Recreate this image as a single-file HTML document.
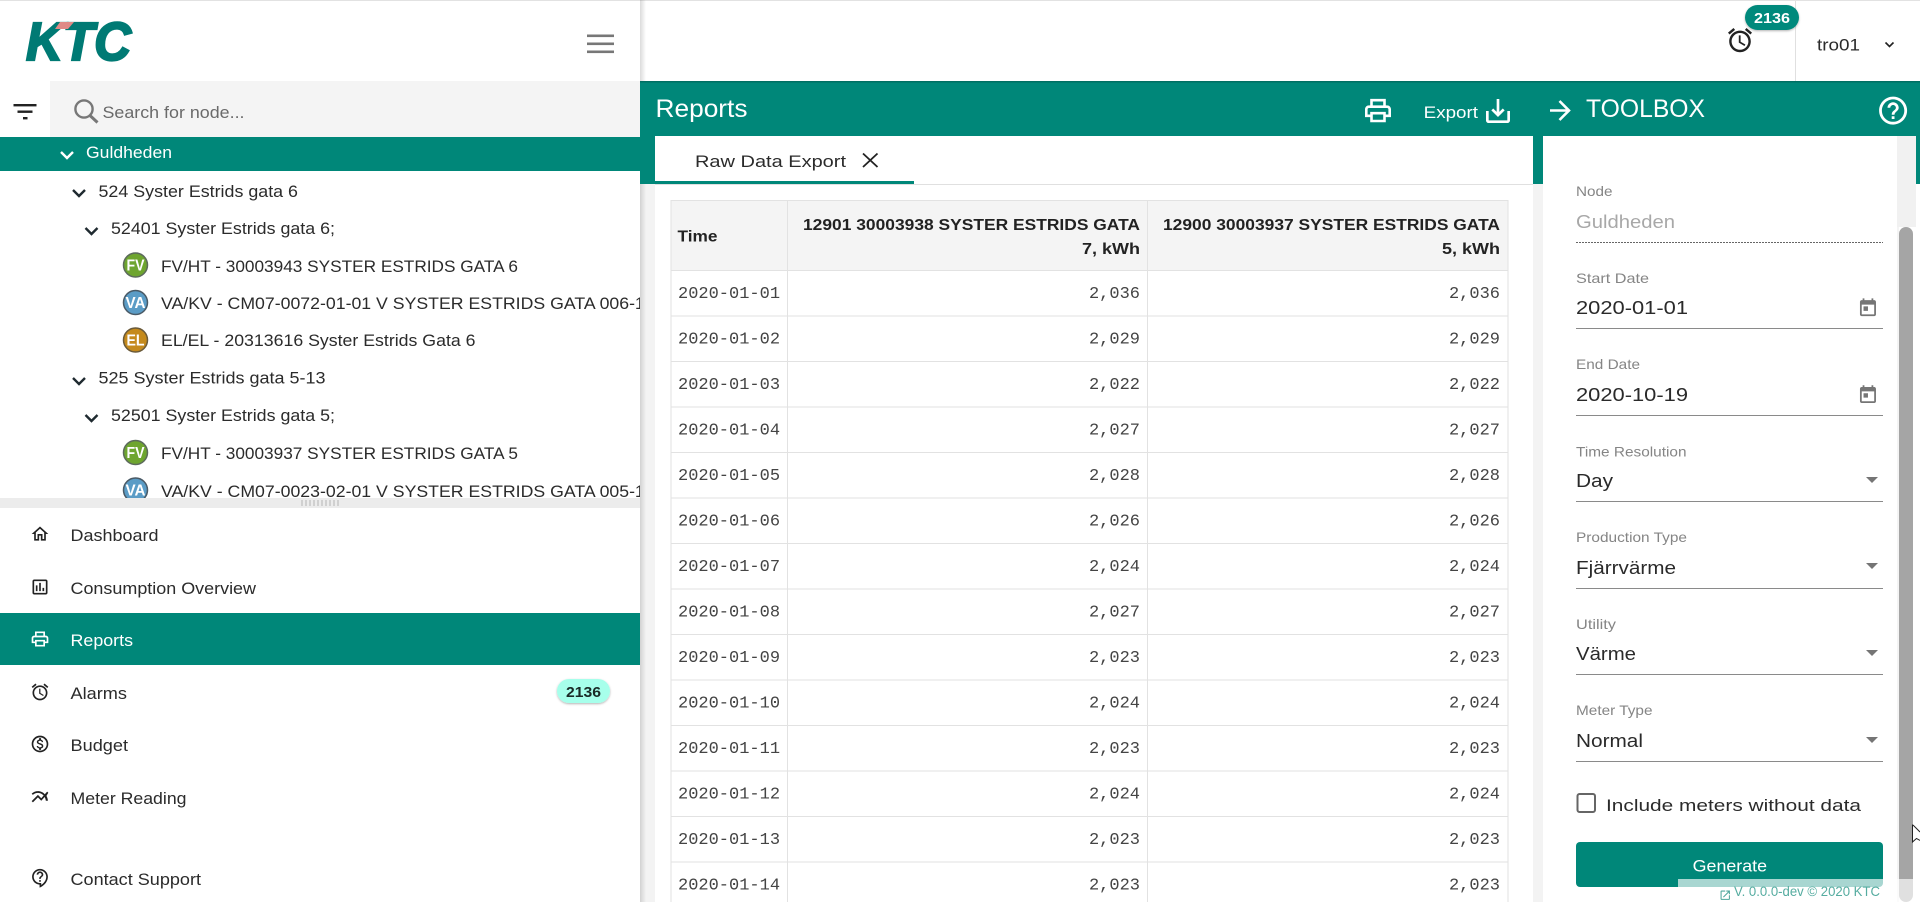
<!DOCTYPE html>
<html lang="en">
<head>
<meta charset="utf-8">
<title>KTC Reports</title>
<style>
html,body{margin:0;padding:0;background:#fff;width:1920px;height:902px;overflow:hidden}
svg{display:block}
text{font-family:"Liberation Sans",sans-serif;font-size:16px;fill:#2b2b2b}
.w{fill:#fff}
.t{font-size:16.5px}
.s{fill:#fff;font-size:15px;font-weight:bold;text-anchor:middle}
.n{fill:#fff;font-size:16px;font-weight:bold;text-anchor:middle}
.h{font-size:25px;fill:#fff}
.b{font-weight:bold;fill:#222}
.m{font-family:"Liberation Mono",monospace;font-size:17px;fill:#444}
.r{text-anchor:end}
.l{font-size:14px;fill:#858585}
.v{font-size:18px;fill:#2a2a2a}
.i{fill:#222}
.g{fill:#757575}
</style>
</head>
<body>
<svg width="1920" height="902" viewBox="0 0 1920 902" xmlns="http://www.w3.org/2000/svg">
<defs>
<linearGradient id="sh" x1="0" x2="1" y1="0" y2="0"><stop offset="0" stop-color="#000" stop-opacity=".14"/><stop offset="1" stop-color="#000" stop-opacity="0"/></linearGradient>
<filter id="bs" x="-20%" y="-20%" width="140%" height="150%"><feDropShadow dx="0" dy="1" stdDeviation="1" flood-color="#000" flood-opacity=".3"/></filter>
<clipPath id="treeClip"><rect x="0" y="171" width="640" height="327"/></clipPath>
<path id="print" d="M19 8h-1V3H6v5H5c-1.66 0-3 1.34-3 3v6h4v4h12v-4h4v-6c0-1.66-1.34-3-3-3zM8 5h8v3H8V5zm8 12v2H8v-4h8v2zm2-2v-2H6v2H4v-4c0-.55.45-1 1-1h14c.55 0 1 .45 1 1v4h-2z"/>
<path id="alarm" d="M22 5.72l-4.6-3.86-1.29 1.53 4.6 3.86L22 5.72zM7.88 3.39L6.6 1.86 2 5.71l1.29 1.53 4.59-3.85zM12.5 8H11v6l4.75 2.85.75-1.23-4-2.37V8zM12 4c-4.97 0-9 4.03-9 9s4.02 9 9 9c4.97 0 9-4.03 9-9s-4.03-9-9-9zm0 16c-3.87 0-7-3.13-7-7s3.13-7 7-7 7 3.13 7 7-3.13 7-7 7z"/>
<path id="cal" d="M19 3h-1V1h-2v2H8V1H6v2H5c-1.11 0-2 .9-2 2v14c0 1.1.89 2 2 2h14c1.1 0 2-.9 2-2V5c0-1.1-.9-2-2-2zm0 16H5V8h14v11zM7 10h5v5H7z"/>
</defs>

<rect width="1920" height="902" fill="#fff"/>
<rect width="1920" height="1" fill="#e2e2e2"/>

<!-- Logo -->
<text x="26" y="60" textLength="105" lengthAdjust="spacingAndGlyphs" style="font-size:54px;font-weight:bold;font-style:italic;fill:#007a74;stroke:#007a74;stroke-width:2.2px">KTC</text>
<polygon points="60,22 74,22 68,29 55,29" fill="#e08a86"/>

<!-- Hamburger -->
<g fill="#777"><rect x="587" y="34.5" width="27" height="2.6"/><rect x="587" y="42.5" width="27" height="2.6"/><rect x="587" y="50.5" width="27" height="2.6"/></g>

<!-- Filter + search -->
<g fill="#222"><rect x="13.5" y="104" width="23" height="2.4"/><rect x="17.5" y="110.5" width="15" height="2.4"/><rect x="23" y="117" width="4.5" height="2.4"/></g>
<rect x="50" y="81" width="590" height="56" fill="#f4f4f4"/>
<circle cx="84" cy="109" r="8.6" fill="none" stroke="#777" stroke-width="2.4"/>
<path d="M90 115.5L97.5 122.5" stroke="#777" stroke-width="3" fill="none"/>
<text class="t" x="102.5" y="118" textLength="142" lengthAdjust="spacingAndGlyphs" style="fill:#6a6a6a">Search for node...</text>

<!-- Tree -->
<rect x="0" y="137" width="640" height="34" fill="#008779"/>
<path d="M61 152l6 6 6-6" fill="none" stroke="#fff" stroke-width="2.4"/>
<text class="w t" x="86" y="158" textLength="86" lengthAdjust="spacingAndGlyphs">Guldheden</text>
<g clip-path="url(#treeClip)">
<g fill="none" stroke="#1f2a30" stroke-width="2.4">
<path d="M73 190l6 6 6-6"/><path d="M85.5 228l6 6 6-6"/><path d="M73 378l6 6 6-6"/><path d="M85.5 415l6 6 6-6"/>
</g>
<text class="t" x="98.5" y="197" textLength="199.5" lengthAdjust="spacingAndGlyphs">524 Syster Estrids gata 6</text>
<text class="t" x="111" y="234" textLength="224" lengthAdjust="spacingAndGlyphs">52401 Syster Estrids gata 6;</text>
<text class="t" x="161" y="272" textLength="357" lengthAdjust="spacingAndGlyphs">FV/HT - 30003943 SYSTER ESTRIDS GATA 6</text>
<text class="t" x="161" y="309" textLength="474" lengthAdjust="spacingAndGlyphs">VA/KV - CM07-0072-01-01 V SYSTER ESTRIDS GATA 006-</text>
<text class="t" x="635" y="309">1</text>
<text class="t" x="161" y="346" textLength="314.5" lengthAdjust="spacingAndGlyphs">EL/EL - 20313616 Syster Estrids Gata 6</text>
<text class="t" x="98.5" y="383.5" textLength="227" lengthAdjust="spacingAndGlyphs">525 Syster Estrids gata 5-13</text>
<text class="t" x="111" y="421" textLength="224" lengthAdjust="spacingAndGlyphs">52501 Syster Estrids gata 5;</text>
<text class="t" x="161" y="459" textLength="357" lengthAdjust="spacingAndGlyphs">FV/HT - 30003937 SYSTER ESTRIDS GATA 5</text>
<text class="t" x="161" y="497" textLength="474" lengthAdjust="spacingAndGlyphs">VA/KV - CM07-0023-02-01 V SYSTER ESTRIDS GATA 005-</text>
<text class="t" x="635" y="497">1</text>
<g stroke="#5c6a5c" stroke-width="1.5">
<circle cx="135.5" cy="265" r="12" fill="#6ea52f"/>
<circle cx="135.5" cy="302.5" r="12" fill="#5b9cc6" stroke="#4a5a66"/>
<circle cx="135.5" cy="340" r="12" fill="#c58a1c" stroke="#6a5a3a"/>
<circle cx="135.5" cy="452.5" r="12" fill="#6ea52f"/>
<circle cx="135.5" cy="490" r="12" fill="#5b9cc6" stroke="#4a5a66"/>
</g>
<text class="n" x="135.5" y="270.5" textLength="18" lengthAdjust="spacingAndGlyphs">FV</text>
<text class="n" x="135.5" y="308" textLength="20" lengthAdjust="spacingAndGlyphs">VA</text>
<text class="n" x="135.5" y="345.5" textLength="18" lengthAdjust="spacingAndGlyphs">EL</text>
<text class="n" x="135.5" y="458" textLength="18" lengthAdjust="spacingAndGlyphs">FV</text>
<text class="n" x="135.5" y="495.5" textLength="20" lengthAdjust="spacingAndGlyphs">VA</text>
</g>

<!-- Splitter -->
<rect x="0" y="498" width="640" height="10" fill="#ececec"/>
<g fill="#d0d0d0"><rect x="301" y="500" width="2" height="6"/><rect x="305" y="500" width="2" height="6"/><rect x="309" y="500" width="2" height="6"/><rect x="313" y="500" width="2" height="6"/><rect x="317" y="500" width="2" height="6"/><rect x="321" y="500" width="2" height="6"/><rect x="325" y="500" width="2" height="6"/><rect x="329" y="500" width="2" height="6"/><rect x="333" y="500" width="2" height="6"/><rect x="337" y="500" width="2" height="6"/></g>

<!-- Navigation -->
<rect x="0" y="613" width="640" height="52" fill="#008779"/>
<path class="i" transform="translate(30 524) scale(.8333)" d="M12 5.69l5 4.5V18h-2v-6H9v6H7v-7.81l5-4.5M12 3L2 12h3v8h6v-6h2v6h6v-8h3L12 3z"/>
<text class="t" x="70.5" y="541" textLength="88" lengthAdjust="spacingAndGlyphs">Dashboard</text>
<path class="i" transform="translate(30 577) scale(.8333)" d="M19 3H5c-1.1 0-2 .9-2 2v14c0 1.1.9 2 2 2h14c1.1 0 2-.9 2-2V5c0-1.1-.9-2-2-2zm0 16H5V5h14v14zM7 10h2v7H7zm4-3h2v10h-2zm4 6h2v4h-2z"/>
<text class="t" x="70.5" y="594" textLength="185.5" lengthAdjust="spacingAndGlyphs">Consumption Overview</text>
<use href="#print" fill="#fff" transform="translate(30 629) scale(.8333)"/>
<text class="w t" x="70.5" y="646" textLength="62.5" lengthAdjust="spacingAndGlyphs">Reports</text>
<use href="#alarm" fill="#222" transform="translate(30 682) scale(.8333)"/>
<text class="t" x="70.5" y="699" textLength="56.5" lengthAdjust="spacingAndGlyphs">Alarms</text>
<rect x="557" y="679" width="53" height="24" rx="12" fill="#a7ffeb" filter="url(#bs)"/>
<text class="s" x="583.5" y="697" textLength="35" lengthAdjust="spacingAndGlyphs" style="fill:#1a2a26">2136</text>
<path class="i" transform="translate(30 734) scale(.8333)" d="M12 2C6.48 2 2 6.48 2 12s4.48 10 10 10 10-4.48 10-10S17.52 2 12 2zm0 18c-4.41 0-8-3.59-8-8s3.59-8 8-8 8 3.59 8 8-3.59 8-8 8zm.31-8.86c-1.77-.45-2.34-.94-2.34-1.67 0-.84.79-1.43 2.1-1.43 1.38 0 1.9.66 1.94 1.64h1.71c-.05-1.34-.87-2.57-2.49-2.97V5H10.9v1.69c-1.51.32-2.72 1.3-2.72 2.81 0 1.79 1.49 2.69 3.66 3.21 1.95.46 2.34 1.15 2.34 1.87 0 .53-.39 1.39-2.1 1.39-1.6 0-2.23-.72-2.32-1.64H8.04c.1 1.7 1.36 2.66 2.86 2.97V19h2.34v-1.67c1.52-.29 2.72-1.16 2.73-2.77-.01-2.2-1.9-2.96-3.66-3.42z"/>
<text class="t" x="70.5" y="751" textLength="57.5" lengthAdjust="spacingAndGlyphs">Budget</text>
<path class="i" transform="translate(30 787) scale(.8333)" d="M22 6.92l-1.41-1.41-2.85 3.21C15.68 6.4 12.83 5 9.61 5 6.72 5 4.07 6.16 2 8l1.42 1.42C5.12 7.93 7.27 7 9.61 7c2.74 0 5.09 1.26 6.77 3.24l-2.88 3.24-4-4L2 16.99l1.5 1.5 6-6.01 4 4 4.05-4.55c.75 1.35 1.25 2.9 1.44 4.55H21.5c-.2-2.12-.77-4.05-1.75-5.78L22 6.92z"/>
<text class="t" x="70.5" y="804" textLength="116" lengthAdjust="spacingAndGlyphs">Meter Reading</text>
<path class="i" transform="translate(30.4 868) scale(.8333)" d="M11 23.59v-3.6c-5.01-.26-9-4.42-9-9.49C2 5.26 6.26 1 11.5 1S21 5.26 21 10.5c0 4.95-3.44 9.93-8.57 12.4l-1.43.69zM11.5 3C7.36 3 4 6.36 4 10.5S7.36 18 11.5 18H13v2.3c3.64-2.3 6-6.08 6-9.8C19 6.36 15.64 3 11.5 3zm-1 11.5h2v2h-2zm2-1.5h-2c0-3.25 3-3 3-5 0-1.1-.9-2-2-2s-2 .9-2 2h-2c0-2.21 1.79-4 4-4s4 1.79 4 4c0 2.5-3 2.75-3 5z"/>
<text class="t" x="70.5" y="885" textLength="130.5" lengthAdjust="spacingAndGlyphs">Contact Support</text>

<!-- Top right -->
<use href="#alarm" fill="#222" transform="translate(1725.6 25.8) scale(1.2)"/>
<rect x="1795" y="1" width="1" height="80" fill="#e0e0e0"/>
<rect x="1745" y="5" width="54" height="25" rx="12.5" fill="#00897b" filter="url(#bs)"/>
<text class="s" x="1772" y="23" textLength="36" lengthAdjust="spacingAndGlyphs">2136</text>
<text class="t" x="1817" y="50.5" textLength="43" lengthAdjust="spacingAndGlyphs">tro01</text>
<path d="M1885.5 42.5l4 4 4-4" fill="none" stroke="#222" stroke-width="1.6"/>

<!-- Main background -->
<rect x="640" y="81" width="1280" height="103" fill="#008779"/>
<rect x="640" y="81" width="1280" height="1.5" fill="#006f63"/>
<rect x="640" y="184" width="15" height="718" fill="#f3f3f3"/>
<rect x="1533" y="184" width="10" height="718" fill="#f3f3f3"/>
<rect x="640" y="0" width="6" height="81" fill="url(#sh)"/>
<rect x="640" y="184" width="6" height="718" fill="url(#sh)"/>
<rect x="655" y="136" width="878" height="766" fill="#fff"/>
<rect x="1543" y="136" width="354" height="766" fill="#fff"/>
<rect x="1897" y="136" width="19" height="91" fill="#f1f1f1"/>
<rect x="1897" y="227" width="2" height="675" fill="#f4f4f4"/>
<rect x="1916" y="184" width="4" height="718" fill="#fff"/>

<!-- Reports header -->
<text class="h" x="655.5" y="117" textLength="92" lengthAdjust="spacingAndGlyphs">Reports</text>
<use href="#print" fill="#fff" transform="translate(1362.4 95) scale(1.3)"/>
<text class="w t" x="1423.7" y="118" textLength="54.3" lengthAdjust="spacingAndGlyphs">Export</text>
<path fill="#fff" transform="translate(1482 95) scale(1.333)" d="M19 12v7H5v-7H3v7c0 1.1.9 2 2 2h14c1.1 0 2-.9 2-2v-7h-2zm-6 .67l2.59-2.58L17 11.5l-5 5-5-5 1.41-1.41L11 12.67V3h2z"/>
<path fill="#fff" transform="translate(1544.8 94.9) scale(1.3)" d="M12 4l-1.41 1.41L16.17 11H4v2h12.17l-5.58 5.59L12 20l8-8z"/>
<text class="h" x="1586" y="117" textLength="119" lengthAdjust="spacingAndGlyphs">TOOLBOX</text>
<path fill="#fff" transform="translate(1876.3 93.8) scale(1.4)" d="M11 18h2v-2h-2v2zm1-16C6.48 2 2 6.48 2 12s4.48 10 10 10 10-4.48 10-10S17.52 2 12 2zm0 18c-4.41 0-8-3.59-8-8s3.59-8 8-8 8 3.59 8 8-3.59 8-8 8zm0-14c-2.21 0-4 1.79-4 4h2c0-1.1.9-2 2-2s2 .9 2 2c0 2-3 1.75-3 5h2c0-2.25 3-2.5 3-5 0-2.21-1.79-4-4-4z"/>

<!-- Tab -->
<rect x="655" y="184" width="878" height="1" fill="#e0e0e0"/>
<rect x="655" y="181" width="259" height="3" fill="#008779"/>
<text x="695" y="167" textLength="151" lengthAdjust="spacingAndGlyphs" style="font-size:17px">Raw Data Export</text>
<path d="M863 153.5L877.5 167M877.5 153.5L863 167" stroke="#222" stroke-width="1.8" fill="none"/>

<!-- Table -->
<rect x="671" y="200" width="837" height="70.5" fill="#f4f4f4"/>
<g fill="none" stroke="#e2e2e2" stroke-width="1">
<path d="M671 200.5H1508"/>
<path d="M671 270.5H1508M671 316H1508M671 361.5H1508M671 407H1508M671 452.5H1508M671 498H1508M671 543.5H1508M671 589H1508M671 634.5H1508M671 680H1508M671 725.5H1508M671 771H1508M671 816.5H1508M671 862H1508"/>
<path d="M671 200V902M787.5 200V902M1147.5 200V902M1508 200V902"/>
</g>
<text class="b" x="677.5" y="241.5" textLength="40" lengthAdjust="spacingAndGlyphs">Time</text>
<text class="b" x="803" y="230" textLength="337" lengthAdjust="spacingAndGlyphs">12901 30003938 SYSTER ESTRIDS GATA</text>
<text class="b" x="1082" y="254" textLength="58" lengthAdjust="spacingAndGlyphs">7, kWh</text>
<text class="b" x="1163" y="230" textLength="337" lengthAdjust="spacingAndGlyphs">12900 30003937 SYSTER ESTRIDS GATA</text>
<text class="b" x="1442" y="254" textLength="58" lengthAdjust="spacingAndGlyphs">5, kWh</text>

<text class="m" x="678" y="298">2020-01-01</text><text class="m r" x="1140" y="298">2,036</text><text class="m r" x="1500" y="298">2,036</text>
<text class="m" x="678" y="343.5">2020-01-02</text><text class="m r" x="1140" y="343.5">2,029</text><text class="m r" x="1500" y="343.5">2,029</text>
<text class="m" x="678" y="389">2020-01-03</text><text class="m r" x="1140" y="389">2,022</text><text class="m r" x="1500" y="389">2,022</text>
<text class="m" x="678" y="434.5">2020-01-04</text><text class="m r" x="1140" y="434.5">2,027</text><text class="m r" x="1500" y="434.5">2,027</text>
<text class="m" x="678" y="480">2020-01-05</text><text class="m r" x="1140" y="480">2,028</text><text class="m r" x="1500" y="480">2,028</text>
<text class="m" x="678" y="525.5">2020-01-06</text><text class="m r" x="1140" y="525.5">2,026</text><text class="m r" x="1500" y="525.5">2,026</text>
<text class="m" x="678" y="571">2020-01-07</text><text class="m r" x="1140" y="571">2,024</text><text class="m r" x="1500" y="571">2,024</text>
<text class="m" x="678" y="616.5">2020-01-08</text><text class="m r" x="1140" y="616.5">2,027</text><text class="m r" x="1500" y="616.5">2,027</text>
<text class="m" x="678" y="662">2020-01-09</text><text class="m r" x="1140" y="662">2,023</text><text class="m r" x="1500" y="662">2,023</text>
<text class="m" x="678" y="707.5">2020-01-10</text><text class="m r" x="1140" y="707.5">2,024</text><text class="m r" x="1500" y="707.5">2,024</text>
<text class="m" x="678" y="753">2020-01-11</text><text class="m r" x="1140" y="753">2,023</text><text class="m r" x="1500" y="753">2,023</text>
<text class="m" x="678" y="798.5">2020-01-12</text><text class="m r" x="1140" y="798.5">2,024</text><text class="m r" x="1500" y="798.5">2,024</text>
<text class="m" x="678" y="844">2020-01-13</text><text class="m r" x="1140" y="844">2,023</text><text class="m r" x="1500" y="844">2,023</text>
<text class="m" x="678" y="889.5">2020-01-14</text><text class="m r" x="1140" y="889.5">2,023</text><text class="m r" x="1500" y="889.5">2,023</text>

<!-- Toolbox form -->
<text class="l" x="1576" y="196" textLength="36.5" lengthAdjust="spacingAndGlyphs">Node</text>
<text class="v" x="1576" y="228" textLength="99" lengthAdjust="spacingAndGlyphs" style="fill:#a8a8a8">Guldheden</text>
<path d="M1576 242.5H1883" stroke="#666" stroke-width="1" stroke-dasharray="2 1" fill="none"/>

<text class="l" x="1576" y="283" textLength="73" lengthAdjust="spacingAndGlyphs">Start Date</text>
<text class="v" x="1576" y="314" textLength="112" lengthAdjust="spacingAndGlyphs">2020-01-01</text>
<use href="#cal" fill="#757575" transform="translate(1857.3 297.5) scale(.889)"/>
<rect x="1576" y="328" width="307" height="1" fill="#8a8a8a"/>

<text class="l" x="1576" y="369" textLength="64" lengthAdjust="spacingAndGlyphs">End Date</text>
<text class="v" x="1576" y="401" textLength="112" lengthAdjust="spacingAndGlyphs">2020-10-19</text>
<use href="#cal" fill="#757575" transform="translate(1857.3 384.3) scale(.889)"/>
<rect x="1576" y="415" width="307" height="1" fill="#8a8a8a"/>

<text class="l" x="1576" y="456.5" textLength="110.5" lengthAdjust="spacingAndGlyphs">Time Resolution</text>
<text class="v" x="1576" y="487" textLength="37" lengthAdjust="spacingAndGlyphs">Day</text>
<polygon class="g" points="1866,477 1878,477 1872,483"/>
<rect x="1576" y="501" width="307" height="1" fill="#8a8a8a"/>

<text class="l" x="1576" y="542" textLength="111" lengthAdjust="spacingAndGlyphs">Production Type</text>
<text class="v" x="1576" y="574" textLength="100" lengthAdjust="spacingAndGlyphs">Fjärrvärme</text>
<polygon class="g" points="1866,563 1878,563 1872,569"/>
<rect x="1576" y="588" width="307" height="1" fill="#8a8a8a"/>

<text class="l" x="1576" y="629" textLength="40" lengthAdjust="spacingAndGlyphs">Utility</text>
<text class="v" x="1576" y="660" textLength="60" lengthAdjust="spacingAndGlyphs">Värme</text>
<polygon class="g" points="1866,650 1878,650 1872,656"/>
<rect x="1576" y="674" width="307" height="1" fill="#8a8a8a"/>

<text class="l" x="1576" y="715" textLength="76.5" lengthAdjust="spacingAndGlyphs">Meter Type</text>
<text class="v" x="1576" y="747" textLength="67" lengthAdjust="spacingAndGlyphs">Normal</text>
<polygon class="g" points="1866,737 1878,737 1872,743"/>
<rect x="1576" y="761" width="307" height="1" fill="#8a8a8a"/>

<rect x="1577.5" y="794" width="17.5" height="18" rx="2" fill="#fff" stroke="#666" stroke-width="2"/>
<text x="1606" y="811" textLength="255" lengthAdjust="spacingAndGlyphs" style="font-size:17px">Include meters without data</text>

<rect x="1576" y="842" width="307" height="45" rx="4" fill="#008779"/>
<text class="w t" x="1692.7" y="871.5" textLength="74.3" lengthAdjust="spacingAndGlyphs">Generate</text>

<!-- Scrollbar -->
<path d="M1899 234a7 7 0 0 1 14 0V895a7 7 0 0 1-14 0z" fill="#a5a5a5"/>

<!-- Cursor -->
<path d="M1912.5 824.5V842l4-3.5 3.500 2" fill="#fff" stroke="#222" stroke-width="1"/>
<path d="M1913 825l7 7" stroke="#222" stroke-width="1"/>

<!-- Footer overlay -->
<rect x="1678" y="879" width="242" height="23" fill="#fff" fill-opacity=".66"/>
<path fill="#4fa79c" transform="translate(1719 889) scale(.52)" d="M19 19H5V5h7V3H5c-1.11 0-2 .9-2 2v14c0 1.1.89 2 2 2h14c1.1 0 2-.9 2-2v-7h-2v7zM14 3v2h3.59l-9.83 9.83 1.41 1.41L19 6.41V10h2V3h-7z"/>
<text x="1734" y="896" textLength="146" lengthAdjust="spacingAndGlyphs" style="font-size:14px;fill:#55aca0">V. 0.0.0-dev © 2020 KTC</text>
</svg>
</body>
</html>
